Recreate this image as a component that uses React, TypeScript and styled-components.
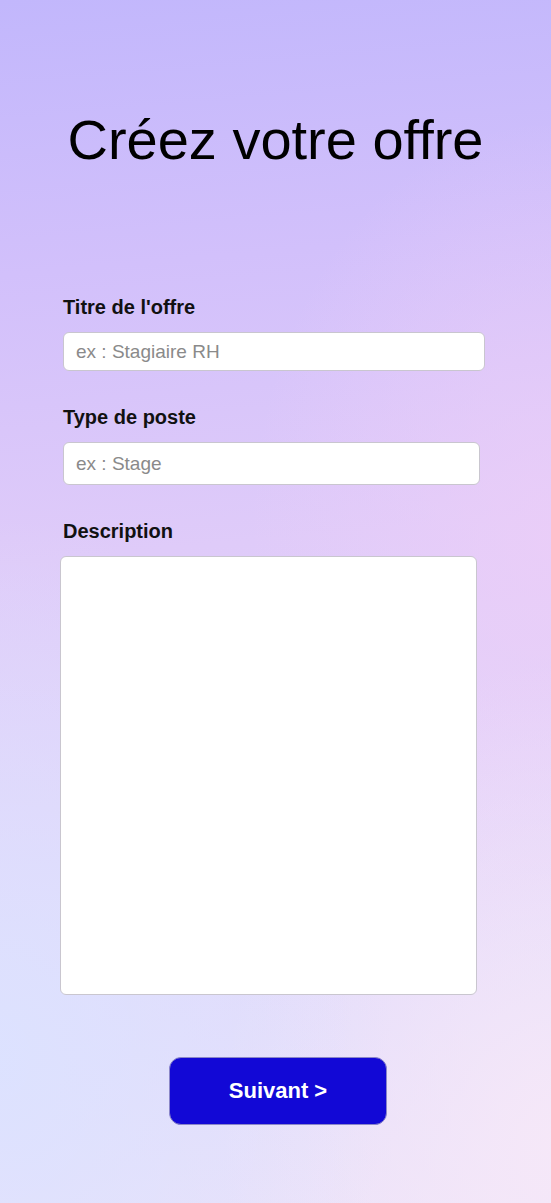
import React, { useState } from "react";
import styled, { createGlobalStyle } from "styled-components";

const GlobalStyle = createGlobalStyle`
  html, body {
    margin: 0;
    padding: 0;
  }
  body {
    font-family: "Liberation Sans", Arial, sans-serif;
    color: #000;
  }
  * {
    box-sizing: border-box;
  }
`;

const App: React.FC = () => {
  const [offer, setOffer] = useState({ title: "", type: "", description: "" });

  const handleChange = (
    e: React.ChangeEvent<HTMLInputElement | HTMLTextAreaElement>
  ) => {
    setOffer({ ...offer, [e.target.name]: e.target.value });
  };

  return (
    <>
      <GlobalStyle />
      <Page>
        <Title>Créez votre offre</Title>
        <Form onSubmit={(e) => e.preventDefault()}>
          <Field>
            <Label htmlFor="title">Titre de l'offre</Label>
            <Input
              id="title"
              name="title"
              type="text"
              placeholder="ex : Stagiaire RH"
              value={offer.title}
              onChange={handleChange}
              $width={422}
              $height={39}
            />
          </Field>
          <Field>
            <Label htmlFor="type">Type de poste</Label>
            <Input
              id="type"
              name="type"
              type="text"
              placeholder="ex : Stage"
              value={offer.type}
              onChange={handleChange}
              $width={417}
              $height={43}
            />
          </Field>
          <Field>
            <Label htmlFor="description">Description</Label>
            <TextArea
              id="description"
              name="description"
              value={offer.description}
              onChange={handleChange}
            />
          </Field>
          <ButtonRow>
            <NextButton type="submit">Suivant &gt;</NextButton>
          </ButtonRow>
        </Form>
      </Page>
    </>
  );
};

const Page = styled.div`
  min-height: 1203px;
  padding-top: 108px;
  background:
    radial-gradient(ellipse 70% 45% at 0% 88%, rgba(220, 226, 255, 0.95) 0%, rgba(220, 226, 255, 0) 100%),
    radial-gradient(ellipse 60% 40% at 100% 95%, rgba(246, 232, 248, 0.95) 0%, rgba(246, 232, 248, 0) 100%),
    radial-gradient(ellipse 55% 35% at 100% 45%, rgba(236, 206, 248, 0.8) 0%, rgba(236, 206, 248, 0) 100%),
    linear-gradient(175deg, #c2b7fc 0%, #d2c0fb 22%, #dfcbf9 45%, #e2d4fa 65%, #e4ddfb 85%, #ebe2f9 100%);
`;

const Title = styled.h1`
  margin: 0;
  font-size: 56px;
  line-height: 64px;
  font-weight: 400;
  text-align: center;
  color: #000;
`;

const Form = styled.form`
  display: flex;
  flex-direction: column;
  padding: 124px 0 0 63px;
`;

const Field = styled.div`
  display: flex;
  flex-direction: column;
  align-items: flex-start;
  margin-bottom: 35px;
`;

const Label = styled.label`
  font-size: 20px;
  line-height: 23px;
  font-weight: 700;
  color: #111;
  margin-bottom: 13px;
`;

const Input = styled.input<{ $width: number; $height: number }>`
  width: ${(p) => p.$width}px;
  height: ${(p) => p.$height}px;
  padding: 0 12px;
  font-family: "Liberation Sans", Arial, sans-serif;
  font-size: 19px;
  color: #222;
  background: #fff;
  border: 1px solid #c9c6cf;
  border-radius: 6px;
  outline: none;

  &::placeholder {
    color: #8a8a8a;
  }
`;

const TextArea = styled.textarea`
  width: 417px;
  height: 439px;
  margin-left: -3px;
  padding: 10px 12px;
  font-family: "Liberation Sans", Arial, sans-serif;
  font-size: 18px;
  background: #fff;
  border: 1px solid #c9c6cf;
  border-radius: 6px;
  resize: none;
  outline: none;
`;

const ButtonRow = styled.div`
  display: flex;
  padding: 27px 0 0 106px;
`;

const NextButton = styled.button`
  width: 218px;
  height: 68px;
  background: #1208d6;
  color: #fff;
  font-family: "Liberation Sans", Arial, sans-serif;
  font-size: 22px;
  font-weight: 700;
  border: 1px solid #8a86c8;
  border-radius: 12px;
  cursor: pointer;
`;

export default App;
